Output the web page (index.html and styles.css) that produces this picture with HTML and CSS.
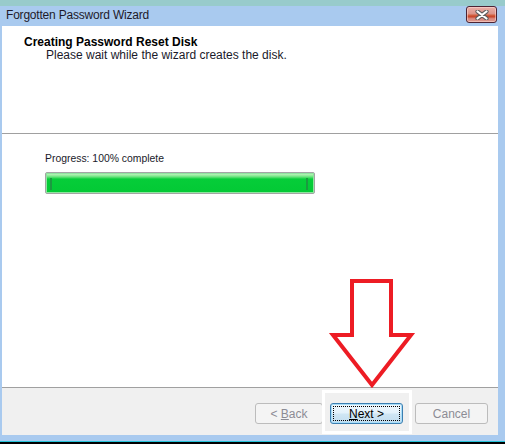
FILE: index.html
```html
<!DOCTYPE html>
<html>
<head>
<meta charset="utf-8">
<link rel="stylesheet" href="styles.css">
</head>
<body>
<div class="screen">
  <div class="top-strip"></div>
  <div class="titlebar">
    <span class="title">Forgotten Password Wizard</span>
    <div class="close-btn">
      <svg width="14" height="10" viewBox="0 0 14 10">
        <path d="M2.5 1.5 L11.5 8.5 M11.5 1.5 L2.5 8.5" stroke="#5b5b5b" stroke-width="4.2" stroke-linecap="round"/>
        <path d="M2.5 1.5 L11.5 8.5 M11.5 1.5 L2.5 8.5" stroke="#ffffff" stroke-width="2.2" stroke-linecap="round"/>
      </svg>
    </div>
  </div>
  <div class="frame">
    <div class="client">
      <div class="header">
        <div class="h-title">Creating Password Reset Disk</div>
        <div class="h-sub">Please wait while the wizard creates the disk.</div>
      </div>
      <div class="sep"></div>
      <div class="content">
        <div class="p-label">Progress: 100% complete</div>
        <div class="pbar"><div class="pfill"></div></div>
      </div>
      <div class="sep"></div>
      <div class="footer">
        <div class="btn disabled back"><span>&lt; <u>B</u>ack</span></div>
        <div class="btn default next"><span class="focus"><u>N</u>ext &gt;</span></div>
        <div class="btn disabled cancel"><span>Cancel</span></div>
        <div class="highlight"></div>
      </div>
    </div>
  </div>
  <div class="bottom-strip"></div>
  <div class="taskbar-line"></div>
  <div class="taskbar"></div>
  <svg class="arrow" width="505" height="444" viewBox="0 0 505 444">
    <polygon points="352,281 391,281 391,335 411,335 372,385 333,335 352,335" fill="#ffffff" stroke="#ed1c24" stroke-width="4" stroke-linejoin="miter"/>
  </svg>
</div>
</body>
</html>
```

FILE: styles.css
```css
html, body {
  margin: 0;
  padding: 0;
  background: #000;
}
.screen {
  position: relative;
  width: 505px;
  height: 444px;
  display: flex;
  flex-direction: column;
  overflow: hidden;
  font-family: "Liberation Sans", Arial, sans-serif;
}
.top-strip {
  height: 6px;
  background: #98cbcb;
}
.titlebar {
  height: 20px;
  background: #a9caef;
  display: flex;
  align-items: flex-start;
  padding-left: 6px;
  padding-right: 8px;
}
.title {
  font-size: 12px;
  line-height: 20px;
  color: #1e1a2a;
  letter-spacing: -0.2px;
  margin-top: -1px;
}
.close-btn {
  margin-left: auto;
  width: 29px;
  height: 15px;
  border: 1px solid #4c2434;
  border-radius: 3px;
  background: linear-gradient(to bottom, #eab0a8 0%, #dc948a 45%, #d2603f 55%, #c8452a 65%, #d98a80 78%, #dc978d 100%);
  box-shadow: inset 0 0 0 1px rgba(255,220,215,0.55);
  display: flex;
  align-items: center;
  justify-content: center;
}
.frame {
  height: 409px;
  display: flex;
  background: #a9caef;
  padding: 0 7px 0 2px;
}
.client {
  flex: 1;
  display: flex;
  flex-direction: column;
  background: #ffffff;
}
.header {
  height: 107px;
  box-sizing: border-box;
  padding: 10px 0 0 22px;
  color: #000;
}
.h-title {
  font-size: 12px;
  font-weight: bold;
  line-height: 13px;
}
.h-sub {
  font-size: 12px;
  line-height: 13px;
  margin-left: 22px;
  color: #1a1a2a;
}
.sep {
  height: 1px;
  background: #a0a0a0;
}
.content {
  flex: 1;
  padding: 18px 0 0 43px;
}
.p-label {
  font-size: 10.4px;
  line-height: 13px;
  color: #1a1a2a;
}
.pbar {
  margin-top: 7px;
  width: 268px;
  height: 20px;
  border: 1px solid #a4a4a4;
  border-radius: 2px;
  background: #e6e6e6;
  padding: 0;
}
.pfill {
  position: relative;
  height: 100%;
  background: linear-gradient(to bottom, #d9f7d9 0px, #b8f2b8 1px, #86ea92 3px, #38d85a 5px, #06cd39 6px, #03c935 100%);
  box-shadow: inset 0 0 0 1px #8fe59f;
}
.pfill::before,
.pfill::after {
  content: "";
  position: absolute;
  top: 5px;
  width: 2px;
  height: 12px;
  background: #1b9a40;
}
.pfill::before { left: 4px; }
.pfill::after { right: 6px; }
.footer {
  position: relative;
  height: 47px;
  box-sizing: border-box;
  background: #f0f0f0;
  display: flex;
  align-items: flex-start;
  padding: 15px 10px 0 0;
  justify-content: flex-end;
}
.btn {
  box-sizing: border-box;
  height: 21px;
  width: 73px;
  border-radius: 3px;
  font-size: 12px;
  display: flex;
  align-items: center;
  justify-content: center;
}
.btn.disabled {
  border: 1px solid #bcbcbc;
  background: #f4f4f4;
  color: #8c8c94;
}
.back {
  width: 68px;
  margin-right: 7px;
}
.next {
  margin-right: 12px;
  border: 1px solid #3c7fb1;
  background: linear-gradient(to bottom, #f1f9fe 0%, #e3f1fa 48%, #cfe6f4 52%, #c3ddef 100%);
  box-shadow: inset 0 0 0 1px #a8ddf8;
  color: #000;
  padding: 2px;
}
.focus {
  flex: 1;
  align-self: stretch;
  display: flex;
  align-items: center;
  justify-content: center;
  border: 1px dotted #000;
}
.highlight {
  position: absolute;
  left: 320px;
  top: 2px;
  width: 84px;
  height: 38px;
  border: 3px solid #ffffff;
}
.bottom-strip {
  height: 6px;
  background: #a9caef;
}
.taskbar-line {
  height: 1px;
  background: #25c2d8;
}
.taskbar {
  flex: 1;
  background: #000;
}
.arrow {
  position: absolute;
  left: 0;
  top: 0;
  pointer-events: none;
}
```
